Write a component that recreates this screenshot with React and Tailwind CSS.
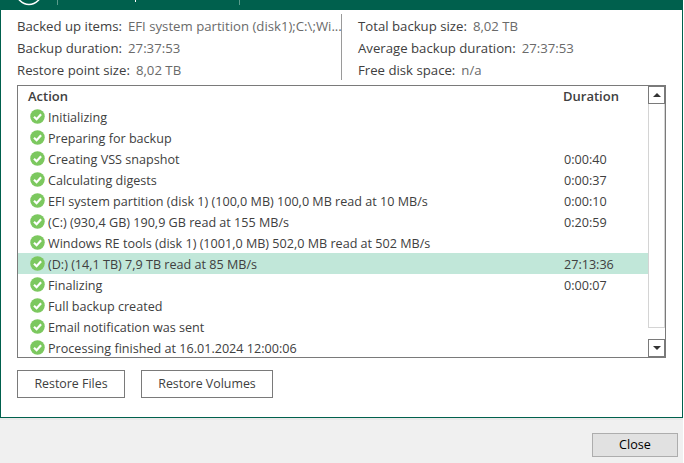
const rows = [
  { action: 'Initializing' },
  { action: 'Preparing for backup' },
  { action: 'Creating VSS snapshot', duration: '0:00:40' },
  { action: 'Calculating digests', duration: '0:00:37' },
  { action: 'EFI system partition (disk 1) (100,0 MB) 100,0 MB read at 10 MB/s', duration: '0:00:10' },
  { action: '(C:) (930,4 GB) 190,9 GB read at 155 MB/s', duration: '0:20:59' },
  { action: 'Windows RE tools (disk 1) (1001,0 MB) 502,0 MB read at 502 MB/s' },
  { action: '(D:) (14,1 TB) 7,9 TB read at 85 MB/s', duration: '27:13:36', selected: true },
  { action: 'Finalizing', duration: '0:00:07' },
  { action: 'Full backup created' },
  { action: 'Email notification was sent' },
  { action: 'Processing finished at 16.01.2024 12:00:06' },
]

function CheckIcon() {
  return (
    <svg width="15" height="15" viewBox="0 0 15 15" className="shrink-0">
      <circle cx="7.5" cy="7.5" r="7.25" fill="#7cc85f" />
      <path d="M4 7.7 L6.6 10.2 L11.1 5.3" fill="none" stroke="#fff" strokeWidth="2.2" />
    </svg>
  )
}

function Stat({ label, value }) {
  return (
    <div className="flex h-[22px] items-center gap-[6px] whitespace-nowrap">
      <span className="text-[#404040]">{label}</span>
      <span className="text-[#6a6a6a]">{value}</span>
    </div>
  )
}

function Button({ children, className }) {
  return (
    <button className={`h-[28px] border border-[#7a7a7a] bg-white text-[12.4px] text-[#404040] ${className}`}>
      {children}
    </button>
  )
}

export default function App() {
  return (
    <div className="flex h-[463px] w-[684px] flex-col overflow-hidden border-r border-white bg-[#f0f0f0] font-['Open_Sans',sans-serif] text-[12.6px]">
      <div className="flex h-[10px] shrink-0 overflow-hidden bg-[#00604d]">
        <svg width="40" height="10" viewBox="0 0 40 10" className="ml-[9px] shrink-0">
          <circle cx="20" cy="-8" r="12.5" fill="none" stroke="#fff" strokeWidth="1.5" />
        </svg>
        <div className="ml-[8px] h-[5px] w-px bg-[#5c9c8c]" />
        <div className="ml-[77px] h-[2px] w-px bg-white" />
        <div className="ml-[103px] h-[5px] w-px bg-[#5c9c8c]" />
      </div>

      <div className="flex h-[408px] shrink-0 flex-col border-x border-b border-[#00604d] bg-white px-[16px]">
        <div className="mt-[4px] flex h-[66px] shrink-0 text-[13.2px]">
          <div className="w-[325px] border-r border-[#9a9a9a] pt-[2px]">
            <Stat label="Backed up items:" value="EFI system partition (disk1);C:\;Wi..." />
            <Stat label="Backup duration:" value="27:37:53" />
            <Stat label="Restore point size:" value="8,02 TB" />
          </div>
          <div className="pl-[16px] pt-[2px]">
            <Stat label="Total backup size:" value="8,02 TB" />
            <Stat label="Average backup duration:" value="27:37:53" />
            <Stat label="Free disk space:" value="n/a" />
          </div>
        </div>

        <div className="mt-[5px] flex h-[273px] shrink-0 border border-[#7a7a7a]">
          <div className="min-w-0 flex-1">
            <div className="flex h-[20px] items-center pt-[1px] text-[13px] font-semibold text-[#404040]">
              <span className="flex-1 pl-[10px]">Action</span>
              <span className="w-[85px]">Duration</span>
            </div>
            {rows.map((row) => (
              <div
                key={row.action}
                className={`flex h-[21px] items-center text-[#404040] ${row.selected ? 'bg-[#c1e7d9]' : ''}`}
              >
                <div className="flex min-w-0 flex-1 items-center gap-[3px] pl-[12px]">
                  <CheckIcon />
                  <span className="whitespace-nowrap pt-[2px] leading-[16px]">{row.action}</span>
                </div>
                <span className="w-[84px] pt-[2px] leading-[16px]">{row.duration}</span>
              </div>
            ))}
          </div>
          <div className="flex w-[17px] shrink-0 flex-col">
            <div className="flex h-[18px] items-center justify-center border border-[#7a7a7a]">
              <div className="h-0 w-0 border-x-[4px] border-b-[4px] border-x-transparent border-b-[#333]" />
            </div>
            <div className="h-[224px] border-x border-b border-[#d4d4d4]" />
            <div className="flex-1" />
            <div className="flex h-[18px] items-center justify-center border border-[#7a7a7a]">
              <div className="h-0 w-0 border-x-[4px] border-t-[4px] border-x-transparent border-t-[#333]" />
            </div>
          </div>
        </div>

        <div className="mt-[12px] flex gap-[16px]">
          <Button className="w-[108px]">Restore Files</Button>
          <Button className="w-[132px]">Restore Volumes</Button>
        </div>
      </div>

      <div className="h-[2px] shrink-0 bg-[#e8e8e8]" />

      <div className="flex flex-1 justify-end pr-[5px] pt-[13px]">
        <button className="h-[24px] w-[86px] border border-[#adadad] bg-[#e1e1e1] text-black">Close</button>
      </div>
    </div>
  )
}
